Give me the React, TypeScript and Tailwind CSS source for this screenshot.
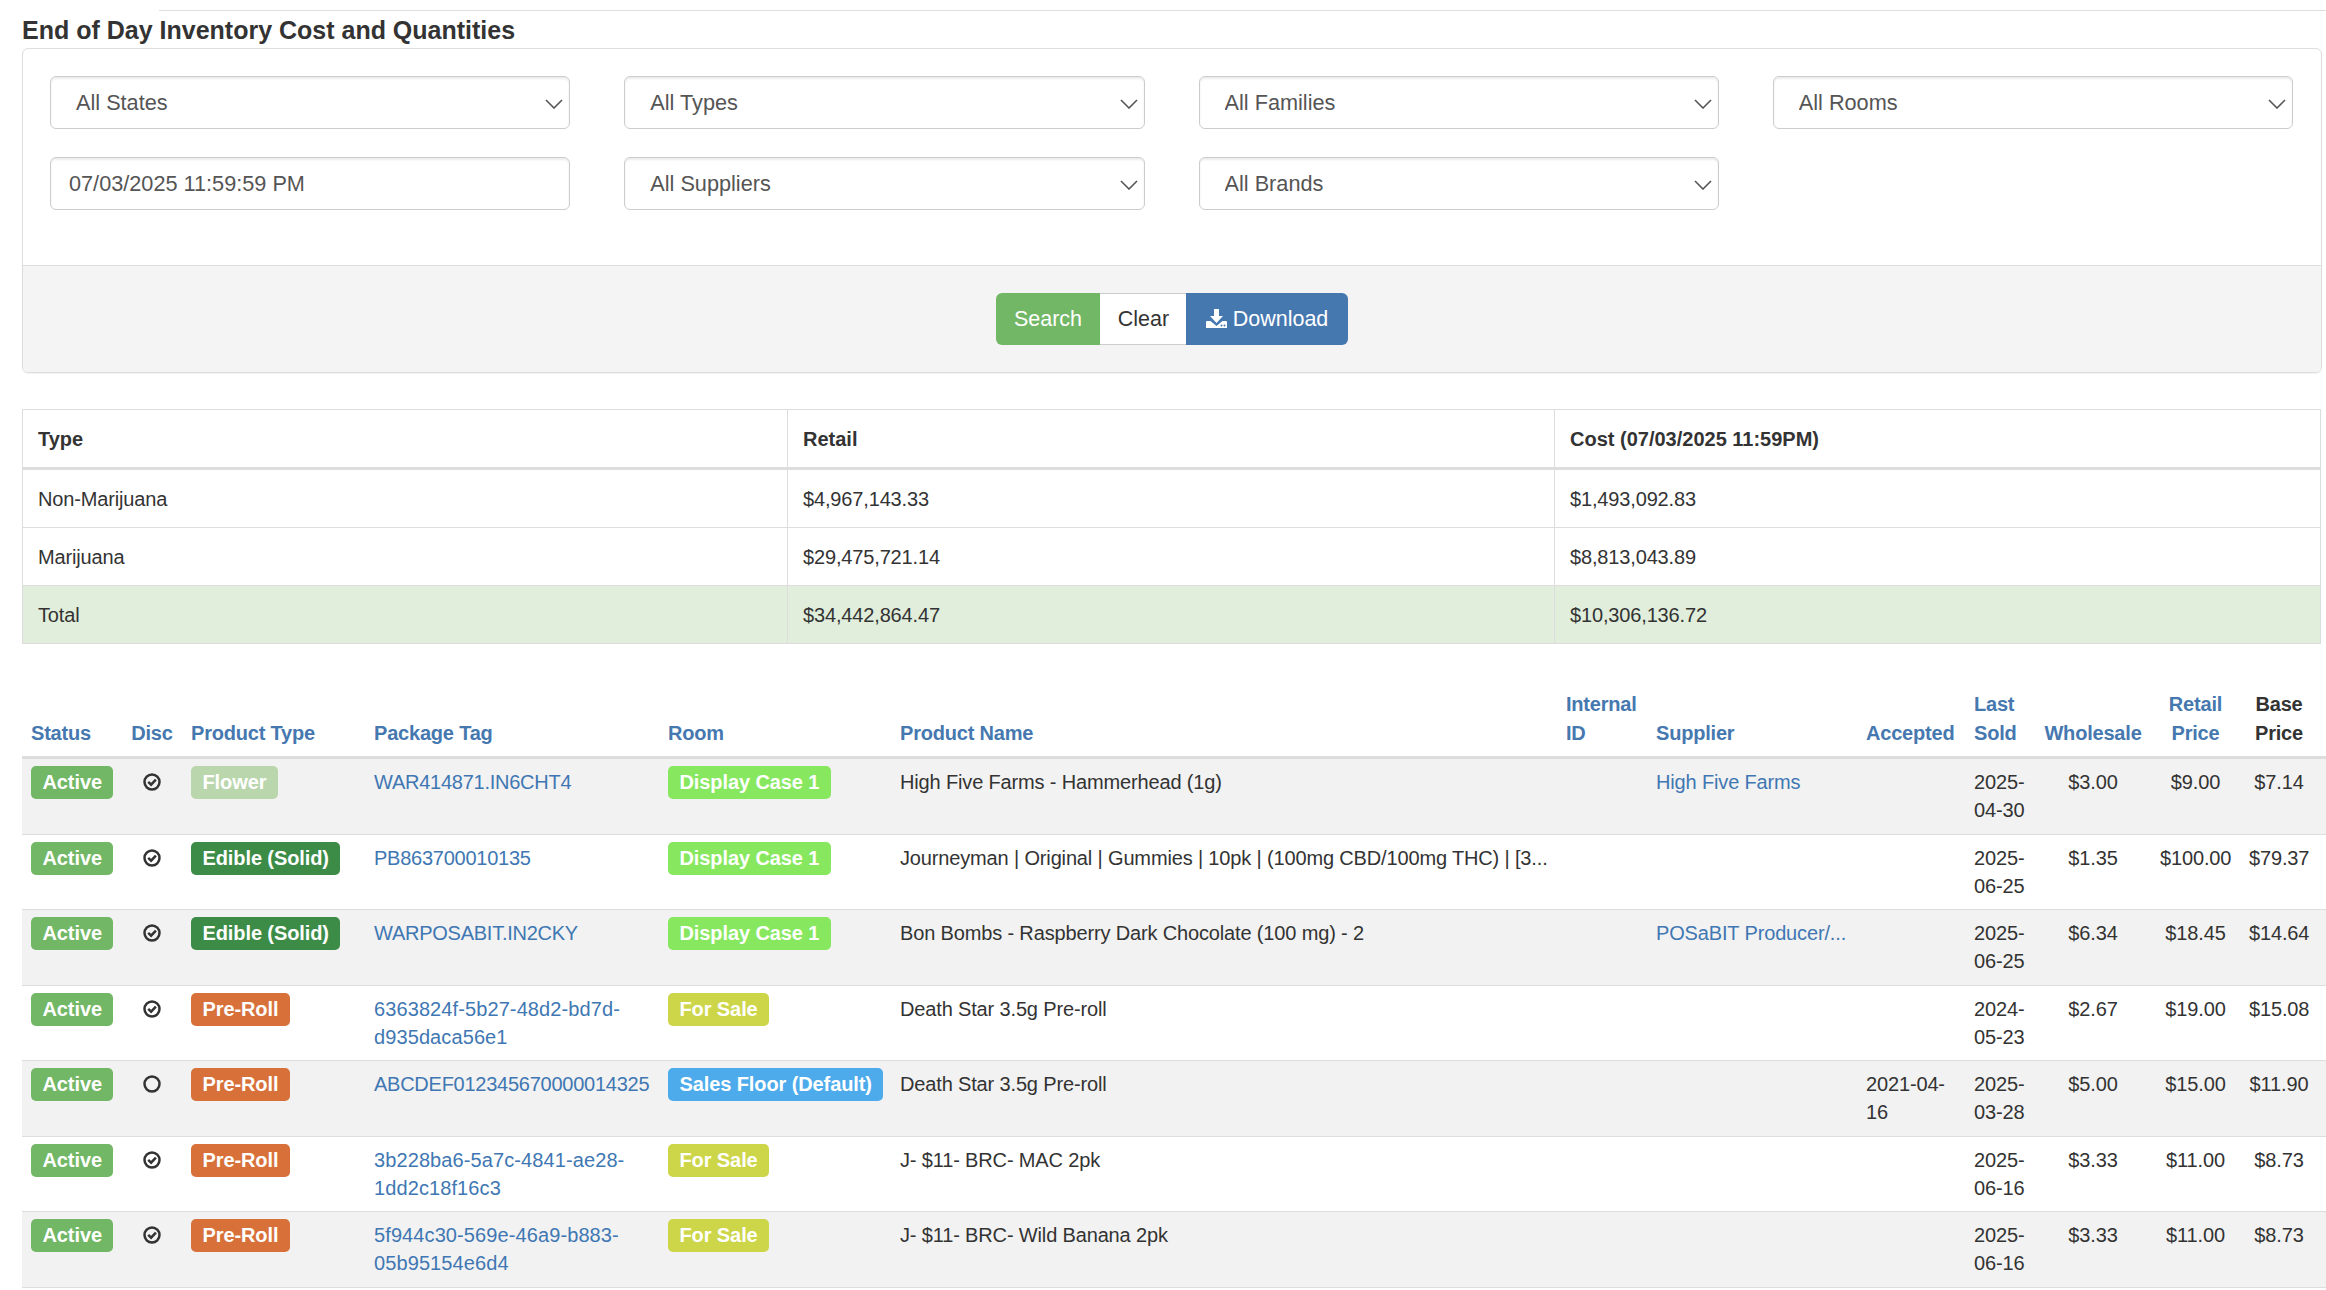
const states = ["All States", "All Types", "All Families", "All Rooms"];
const lower = ["All Suppliers", "All Brands"];

const summary = [
  { type: "Non-Marijuana", retail: "$4,967,143.33", cost: "$1,493,092.83" },
  { type: "Marijuana", retail: "$29,475,721.14", cost: "$8,813,043.89" },
  { type: "Total", retail: "$34,442,864.47", cost: "$10,306,136.72" },
];

const productTypes: Record<string, string> = {
  Flower: "bg-[#bad6ad]",
  "Edible (Solid)": "bg-[#3c8c47]",
  "Pre-Roll": "bg-[#d87039]",
};

const rooms: Record<string, string> = {
  "Display Case 1": "bg-[#87e85f]",
  "For Sale": "bg-[#cdd648]",
  "Sales Floor (Default)": "bg-[#4dabeb]",
};

const rows = [
  { disc: true, type: "Flower", tag: "WAR414871.IN6CHT4", room: "Display Case 1", name: "High Five Farms - Hammerhead (1g)", supplier: "High Five Farms", accepted: "", sold: "2025-04-30", wholesale: "$3.00", retail: "$9.00", base: "$7.14" },
  { disc: true, type: "Edible (Solid)", tag: "PB863700010135", room: "Display Case 1", name: "Journeyman | Original | Gummies | 10pk | (100mg CBD/100mg THC) | [3...", supplier: "", accepted: "", sold: "2025-06-25", wholesale: "$1.35", retail: "$100.00", base: "$79.37" },
  { disc: true, type: "Edible (Solid)", tag: "WARPOSABIT.IN2CKY", room: "Display Case 1", name: "Bon Bombs - Raspberry Dark Chocolate (100 mg) - 2", supplier: "POSaBIT Producer/...", accepted: "", sold: "2025-06-25", wholesale: "$6.34", retail: "$18.45", base: "$14.64" },
  { disc: true, type: "Pre-Roll", tag: "6363824f-5b27-48d2-bd7d-d935daca56e1", room: "For Sale", name: "Death Star 3.5g Pre-roll", supplier: "", accepted: "", sold: "2024-05-23", wholesale: "$2.67", retail: "$19.00", base: "$15.08" },
  { disc: false, type: "Pre-Roll", tag: "ABCDEF012345670000014325", room: "Sales Floor (Default)", name: "Death Star 3.5g Pre-roll", supplier: "", accepted: "2021-04-16", sold: "2025-03-28", wholesale: "$5.00", retail: "$15.00", base: "$11.90" },
  { disc: true, type: "Pre-Roll", tag: "3b228ba6-5a7c-4841-ae28-1dd2c18f16c3", room: "For Sale", name: "J- $11- BRC- MAC 2pk", supplier: "", accepted: "", sold: "2025-06-16", wholesale: "$3.33", retail: "$11.00", base: "$8.73" },
  { disc: true, type: "Pre-Roll", tag: "5f944c30-569e-46a9-b883-05b95154e6d4", room: "For Sale", name: "J- $11- BRC- Wild Banana 2pk", supplier: "", accepted: "", sold: "2025-06-16", wholesale: "$3.33", retail: "$11.00", base: "$8.73" },
];

const SelectBox = ({ label }: { label: string }) => (
  <div className="relative h-[53px]">
    <select className="w-full h-full appearance-none bg-white border border-[#ccc] rounded-[6px] pl-[25px] pt-[2px] text-[21.700px] tracking-normal text-[#555] shadow-[inset_0_2px_2px_rgba(0,0,0,0.075)]">
      <option>{label}</option>
    </select>
    <svg className="absolute right-[7px] top-[23px] pointer-events-none" width="18" height="10" viewBox="0 0 18 10" fill="none">
      <path d="M1 1l8 8 8-8" stroke="#555" strokeWidth="1.6" />
    </svg>
  </div>
);

const Badge = ({ text, color }: { text: string; color: string }) => (
  <span className={`block w-fit h-[33px] leading-[33px] px-[11.500px] rounded-[5px] font-bold tracking-[-0.1px] text-white whitespace-nowrap ${color}`}>
    {text}
  </span>
);

const DiscIcon = ({ on }: { on: boolean }) => (
  <svg className="mx-auto mt-[7px]" width="18" height="18" viewBox="0 0 18 18" fill="none">
    <circle cx="9" cy="9" r="7.500" stroke="#333" strokeWidth="2.500" />
    {on && <path d="M5.200 8.800l2.900 2.900 4.800-5.100" stroke="#333" strokeWidth="2.500" />}
  </svg>
);

const App = () => {
  return (
    <div className="min-h-screen bg-white pl-[22px] text-[20px] leading-[28.5px] tracking-[-0.15px] text-[#333] font-['Liberation_Sans',Arial,sans-serif] overflow-hidden">
      <div className="flex h-[11px]">
        <div className="w-[137px]" />
        <div className="flex-1 border-b border-[#ddd]" />
      </div>
      <h1 className="h-[37px] pt-[1px] flex items-center text-[25px] tracking-normal font-bold text-[#333]">
        End of Day Inventory Cost and Quantities
      </h1>

      <div className="mr-[4px] border border-[#ddd] rounded-[6px] shadow-[0_1px_1px_rgba(0,0,0,0.05)] overflow-hidden">
        <div className="pt-[27px] pb-[55px] pl-[27px] pr-[28px] grid grid-cols-4 gap-x-[54px] gap-y-[28px]">
          {states.map((s) => (
            <SelectBox key={s} label={s} />
          ))}
          <input
            readOnly
            value="07/03/2025 11:59:59 PM"
            className="h-[53px] w-full border border-[#ccc] rounded-[6px] pl-[18px] pt-[1px] text-[21.700px] tracking-normal text-[#555] shadow-[inset_0_2px_2px_rgba(0,0,0,0.075)]"
          />
          {lower.map((s) => (
            <SelectBox key={s} label={s} />
          ))}
        </div>
        <div className="bg-[#f4f4f4] border-t border-[#ddd] pt-[27px] pb-[27px] flex justify-center text-[21.500px] tracking-normal">
          <button className="h-[52px] w-[104px] pt-[1px] bg-[#72b765] text-white rounded-l-[6px]">Search</button>
          <button className="h-[52px] w-[86px] pt-[1px] pl-[1px] bg-white border-y border-[#ccc] text-[#333]">Clear</button>
          <button className="h-[52px] w-[162px] pt-[1px] bg-[#4678b0] text-white rounded-r-[6px] flex items-center justify-center gap-[6px]">
            <svg className="mb-[2px]" width="21" height="19" viewBox="0 0 21 19" fill="#fff">
              <path d="M8 0h5v7h4l-6.500 7L4 7h4z" />
              <path d="M0 19v-6a1 1 0 0 1 1-1h3.500l6 5 6-5H20a1 1 0 0 1 1 1v6z" />
              <circle cx="15.500" cy="16.500" r="1" fill="#4678b0" />
              <circle cx="18.500" cy="16.500" r="1" fill="#4678b0" />
            </svg>
            Download
          </button>
        </div>
      </div>

      <table className="mt-[36px] mr-[5px] w-[2299px] table-fixed border-separate border-spacing-0">
        <thead>
          <tr className="text-left tracking-normal">
            {["Type", "Retail", "Cost (07/03/2025 11:59PM)"].map((h, i) => (
              <th
                key={h}
                className={
                  i === 0
                    ? "h-[61px] w-[766px] px-[15px] pt-[1px] font-bold border-t border-b-[3px] border-l border-r border-[#ddd]"
                    : i === 1
                      ? "h-[61px] w-[767px] px-[15px] pt-[1px] font-bold border-t border-b-[3px] border-r border-[#ddd]"
                      : "h-[61px] px-[15px] pt-[1px] font-bold border-t border-b-[3px] border-r border-[#ddd]"
                }
              >
                {h}
              </th>
            ))}
          </tr>
        </thead>
        <tbody>
          {summary.map((r, i) => (
            <tr key={r.type} className={i === 2 ? "bg-[#e1eedb]" : ""}>
              <td className="h-[58px] px-[15px] pt-[2px] border-b border-l border-r border-[#ddd]">{r.type}</td>
              <td className="h-[58px] px-[15px] pt-[2px] border-b border-r border-[#ddd]">{r.retail}</td>
              <td className="h-[58px] px-[15px] pt-[2px] border-b border-r border-[#ddd]">{r.cost}</td>
            </tr>
          ))}
        </tbody>
      </table>

      <table className="mt-[46px] w-[2304px] table-fixed border-separate border-spacing-0">
        <colgroup>
          <col className="w-[100px]" />
          <col className="w-[60px]" />
          <col className="w-[183px]" />
          <col className="w-[294px]" />
          <col className="w-[232px]" />
          <col className="w-[666px]" />
          <col className="w-[90px]" />
          <col className="w-[210px]" />
          <col className="w-[108px]" />
          <col className="w-[70px]" />
          <col className="w-[116px]" />
          <col className="w-[89px]" />
          <col className="w-[86px]" />
        </colgroup>
        <thead>
          <tr className="align-bottom font-bold tracking-[-0.2px] text-[#4678b0]">
            <th className="px-[9px] pb-[9px] text-left border-b-[3px] border-[#ddd]">Status</th>
            <th className="px-[9px] pb-[9px] text-center border-b-[3px] border-[#ddd]">Disc</th>
            <th className="px-[9px] pb-[9px] text-left border-b-[3px] border-[#ddd]">Product Type</th>
            <th className="px-[9px] pb-[9px] text-left border-b-[3px] border-[#ddd]">Package Tag</th>
            <th className="px-[9px] pb-[9px] text-left border-b-[3px] border-[#ddd]">Room</th>
            <th className="px-[9px] pb-[9px] text-left border-b-[3px] border-[#ddd]">Product Name</th>
            <th className="px-[9px] pb-[9px] text-left border-b-[3px] border-[#ddd]">Internal ID</th>
            <th className="px-[9px] pb-[9px] text-left border-b-[3px] border-[#ddd]">Supplier</th>
            <th className="px-[9px] pb-[9px] text-left border-b-[3px] border-[#ddd]">Accepted</th>
            <th className="px-[9px] pb-[9px] text-left border-b-[3px] border-[#ddd]">Last Sold</th>
            <th className="px-[9px] pb-[9px] text-center border-b-[3px] border-[#ddd]">Wholesale</th>
            <th className="px-[9px] pb-[9px] text-center border-b-[3px] border-[#ddd]">Retail Price</th>
            <th className="pl-[9px] pr-[17px] pb-[9px] text-center border-b-[3px] border-[#ddd] text-[#333]">Base Price</th>
          </tr>
        </thead>
        <tbody>
          {rows.map((r, i) => (
            <tr key={i} className={`align-top ${i % 2 === 0 ? "bg-[#f2f2f2] h-[76px]" : "bg-white h-[75px]"}`}>
              <td className="px-[9px] pt-[7px] border-b border-[#ddd]">
                <Badge text="Active" color="bg-[#72b765]" />
              </td>
              <td className="px-[9px] pt-[7px] border-b border-[#ddd]">
                <DiscIcon on={r.disc} />
              </td>
              <td className="px-[9px] pt-[7px] border-b border-[#ddd]">
                <Badge text={r.type} color={productTypes[r.type]} />
              </td>
              <td className={`px-[9px] pt-[8.500px] border-b border-[#ddd] text-[#4077b3] ${r.tag.includes("-") ? "tracking-[0.1px]" : "tracking-[-0.25px]"}`}>
                {r.tag}
              </td>
              <td className="px-[9px] pt-[7px] border-b border-[#ddd]">
                <Badge text={r.room} color={rooms[r.room]} />
              </td>
              <td className="px-[9px] pt-[8.500px] border-b border-[#ddd] whitespace-nowrap">{r.name}</td>
              <td className="px-[9px] pt-[8.500px] border-b border-[#ddd]"></td>
              <td className="px-[9px] pt-[8.500px] border-b border-[#ddd] text-[#4077b3] whitespace-nowrap">{r.supplier}</td>
              <td className="px-[9px] pt-[8.500px] border-b border-[#ddd]">{r.accepted}</td>
              <td className="px-[9px] pt-[8.500px] border-b border-[#ddd]">{r.sold}</td>
              <td className="px-[9px] pt-[8.500px] border-b border-[#ddd] text-center">{r.wholesale}</td>
              <td className="px-[9px] pt-[8.500px] border-b border-[#ddd] text-center">{r.retail}</td>
              <td className="pl-[9px] pr-[17px] pt-[8.500px] border-b border-[#ddd] text-center">{r.base}</td>
            </tr>
          ))}
        </tbody>
      </table>
    </div>
  );
};

export default App;
